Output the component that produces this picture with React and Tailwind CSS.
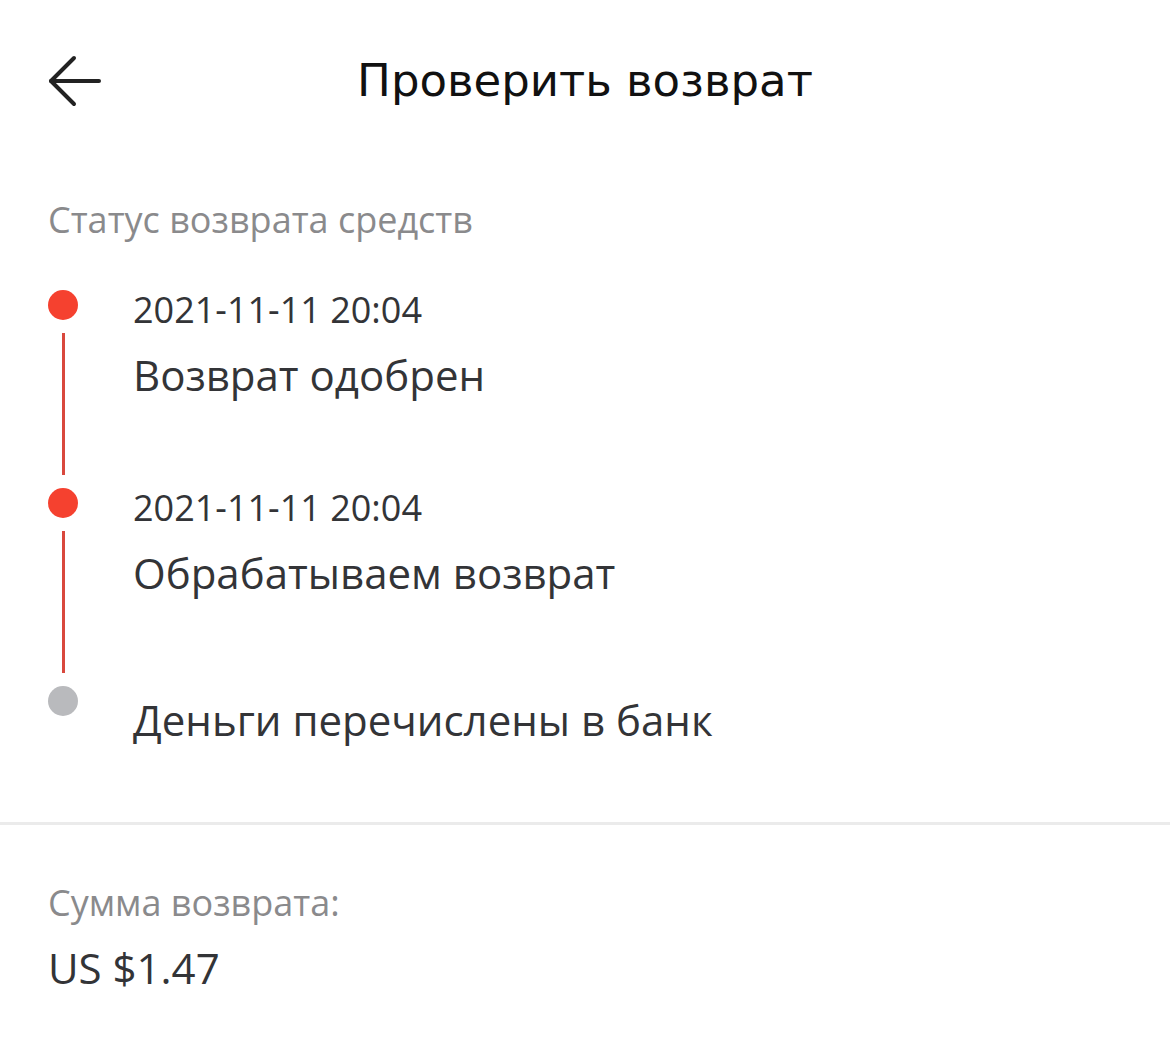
import React from "react";

const steps = [
  { date: "2021-11-11 20:04", text: "Возврат одобрен", active: true, line: true },
  { date: "2021-11-11 20:04", text: "Обрабатываем возврат", active: true, line: true },
  { date: null, text: "Деньги перечислены в банк", active: false, line: false },
];

function Step({ step }) {
  return (
    <div className={step.line ? "flex h-[198px]" : "flex h-[136px]"}>
      <div className="flex w-[30px] flex-col items-center">
        <div
          className={
            step.active
              ? "h-[30px] w-[30px] rounded-full bg-[#f5412f]"
              : "h-[30px] w-[30px] rounded-full bg-[#b9babd]"
          }
        />
        {step.line && <div className="mt-[13px] h-[142px] w-[3px] bg-[#d9483d]" />}
      </div>
      <div className="ml-[55px] flex flex-col">
        {step.date ? (
          <>
            <div className="text-[36px] leading-[40px] text-[#333437]">{step.date}</div>
            <div className="mt-[21px] text-[42px] leading-[48px] text-[#333437]">{step.text}</div>
          </>
        ) : (
          <div className="mt-[10px] text-[42px] leading-[48px] text-[#333437]">{step.text}</div>
        )}
      </div>
    </div>
  );
}

export default function App() {
  return (
    <div
      className="min-h-[1064px] w-[1170px] bg-white"
      style={{ fontFamily: '"Open Sans", "Noto Sans", sans-serif' }}
    >
      <div className="relative flex h-[164px] items-center justify-center">
        <button className="absolute left-[46px] top-[55px] h-[52px] w-[56px] text-[#222]">
          <svg viewBox="0 0 56 52" className="h-[52px] w-[56px]" fill="none" stroke="currentColor" strokeWidth="4" strokeLinecap="round" strokeLinejoin="round">
            <path d="M53 26H5" />
            <path d="M28 3L5 26l23 23" />
          </svg>
        </button>
        <h1
          className="-mt-[2px] text-[45px] font-normal text-[#111]"
          style={{ fontFamily: '"DejaVu Sans", sans-serif' }}
        >
          Проверить возврат
        </h1>
      </div>
      <div className="pl-[48px]">
        <div className="mt-[34px] text-[36px] leading-[44px] text-[#8a8a8c]">Статус возврата средств</div>
        <div className="mt-[48px]">
          {steps.map((s, i) => (
            <Step key={i} step={s} />
          ))}
        </div>
      </div>
      <div className="h-[3px] w-full bg-[#ebebeb]" />
      <div className="pl-[48px] pt-[56px]">
        <div className="text-[36px] leading-[44px] text-[#8a8a8c]">Сумма возврата:</div>
        <div className="mt-[19px] text-[42px] leading-[48px] text-[#333437]">US $1.47</div>
      </div>
    </div>
  );
}
